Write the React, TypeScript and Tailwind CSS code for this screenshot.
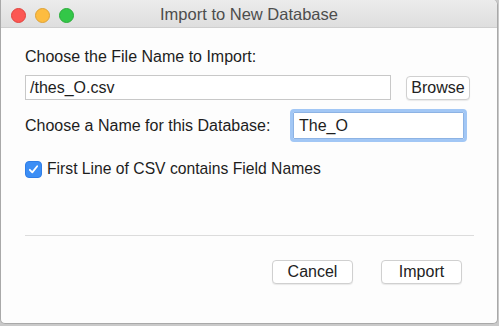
import React from "react";

const FONT = "'Liberation Sans', Arial, sans-serif";

function TrafficLights() {
  return (
    <div className="absolute left-[10px] top-[8px] flex gap-[9px]">
      <span className="w-[15px] h-[15px] rounded-full bg-[#fc5753] border border-[#e0443e]" />
      <span className="w-[15px] h-[15px] rounded-full bg-[#fdbc40] border border-[#dea236]" />
      <span className="w-[15px] h-[15px] rounded-full bg-[#33c748] border border-[#2aac3a]" />
    </div>
  );
}

function Button({ label, w }: { label: string; w: string }) {
  return (
    <button
      className={`${w} h-[24px] rounded-[4px] bg-white border border-[#d0d0d0] text-[16px] leading-none text-[#222] shadow-[0_1px_1px_rgba(0,0,0,0.08)] flex items-center justify-center`}
    >
      {label}
    </button>
  );
}

export default function App() {
  return (
    <div
      className="w-[499px] h-[326px] bg-[#c9c9c9] overflow-hidden antialiased"
      style={{ fontFamily: FONT }}
    >
      <div className="w-[498px] h-[324px] flex flex-col bg-[#fdfdfd] border-l border-r border-b border-[#a9a9a9] rounded-b-[5px] rounded-tr-[5px] overflow-hidden">
        {/* Title bar */}
        <div className="relative h-[28px] shrink-0 bg-gradient-to-b from-[#ececec] to-[#dedede] border-b border-[#cfcfcf] flex items-center justify-center">
          <TrafficLights />
          <span className="text-[16.5px] text-[#4d4d4d] mt-[2px]">Import to New Database</span>
        </div>

        {/* Body */}
        <div className="flex flex-col px-[24px] pt-[20px] text-[16px] text-[#1d1d1d]">
          <div className="leading-[18px]">Choose the File Name to Import:</div>

          <div className="mt-[9px] flex items-end">
            <div className="w-[366px] h-[25px] bg-white border border-[#c8c8c8] flex items-center pl-[4px]">
              /thes_O.csv
            </div>
            <div className="ml-[15px]">
              <Button label="Browse" w="w-[64px] h-[23px]" />
            </div>
          </div>

          <div className="mt-[9px] flex items-center">
            <span className="w-[265px] leading-[18px]">Choose a Name for this Database:</span>
            <div className="w-[177px] h-[33px] rounded-[4px] border-[3px] border-[#a2c7f5] bg-white flex items-center">
              <div className="h-full w-full border border-[#8db3e4] rounded-[1px] flex items-center pl-[5px]">
                The_O
              </div>
            </div>
          </div>

          <div className="mt-[18px] flex items-center gap-[5px]">
            <span className="w-[17px] h-[17px] rounded-[4px] bg-[#3c8ef5] border border-[#2f7de6] flex items-center justify-center">
              <svg width="11" height="11" viewBox="0 0 11 11" fill="none">
                <path d="M1.8 5.8 L4.3 8.4 L9.2 2.2" stroke="white" strokeWidth="1.8" strokeLinecap="round" strokeLinejoin="round" />
              </svg>
            </span>
            <span className="leading-[18px] text-[15.7px]">First Line of CSV contains Field Names</span>
          </div>

          <div className="mt-[57px] w-[449px] h-px bg-[#dcdcdc]" />

          <div className="mt-[24px] flex justify-end gap-[28px] pr-[11px]">
            <Button label="Cancel" w="w-[81px]" />
            <Button label="Import" w="w-[81px]" />
          </div>
        </div>
      </div>
    </div>
  );
}
